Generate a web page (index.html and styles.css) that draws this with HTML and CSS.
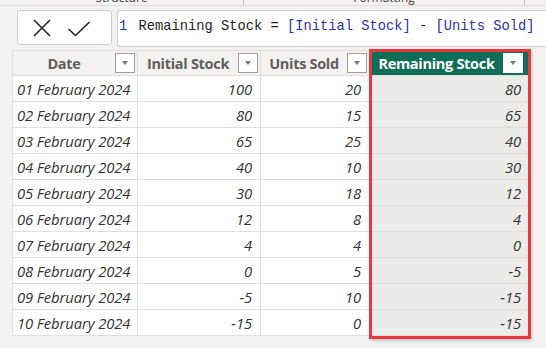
FILE: index.html
```html
<!DOCTYPE html>
<html>
<head>
<meta charset="utf-8">
<link rel="stylesheet" href="styles.css">
</head>
<body>
<div class="ribbon">
  <div class="rib-group g1"><span>Structure</span></div>
  <div class="rib-group g2"><span>Formatting</span></div>
  <div class="rib-group g3"></div>
</div>
<div class="formula-row">
  <div class="fx-buttons">
    <svg class="ico-x" width="20" height="20" viewBox="0 0 20 20"><path d="M2 2 L18 18 M18 2 L2 18" stroke="#252423" stroke-width="1.6" fill="none"/></svg>
    <svg class="ico-check" width="24" height="16" viewBox="0 0 24 16"><path d="M1.5 8 L8.5 14.5 L22.5 1" stroke="#252423" stroke-width="1.6" fill="none"/></svg>
  </div>
  <div class="fx-box"><span class="ln">1</span> Remaining Stock = <span class="ref">[Initial Stock]</span> - <span class="ref">[Units Sold]</span></div>
</div>
<div class="table-wrap">
  <div class="grid">
    <div class="hd"><span class="ht">Date</span><span class="dd"></span></div>
    <div class="hd"><span class="ht">Initial Stock</span><span class="dd"></span></div>
    <div class="hd"><span class="ht">Units Sold</span><span class="dd"></span></div>
    <div class="hd sel"><span class="ht">Remaining Stock</span><span class="dd"></span></div>

    <div class="c d">01 February 2024</div><div class="c n">100</div><div class="c n">20</div><div class="c n s">80</div>
    <div class="c d">02 February 2024</div><div class="c n">80</div><div class="c n">15</div><div class="c n s">65</div>
    <div class="c d">03 February 2024</div><div class="c n">65</div><div class="c n">25</div><div class="c n s">40</div>
    <div class="c d">04 February 2024</div><div class="c n">40</div><div class="c n">10</div><div class="c n s">30</div>
    <div class="c d">05 February 2024</div><div class="c n">30</div><div class="c n">18</div><div class="c n s">12</div>
    <div class="c d">06 February 2024</div><div class="c n">12</div><div class="c n">8</div><div class="c n s">4</div>
    <div class="c d">07 February 2024</div><div class="c n">4</div><div class="c n">4</div><div class="c n s">0</div>
    <div class="c d">08 February 2024</div><div class="c n">0</div><div class="c n">5</div><div class="c n s">-5</div>
    <div class="c d">09 February 2024</div><div class="c n">-5</div><div class="c n">10</div><div class="c n s">-15</div>
    <div class="c d">10 February 2024</div><div class="c n">-15</div><div class="c n">0</div><div class="c n s">-15</div>
  </div>
  <div class="highlight"></div>
</div>
</body>
</html>
```
FILE: styles.css
```css
html, body {
  margin: 0;
  padding: 0;
  background: #f3f2f1;
  width: 546px;
  height: 348px;
  overflow: hidden;
  font-family: "Open Sans", "Noto Sans", sans-serif;
}
.ribbon {
  height: 5px;
  display: flex;
  overflow: hidden;
  border-bottom: 1px solid #e1dfdd;
  background: #f3f2f1;
}
.rib-group {
  height: 5px;
  border-right: 1px solid #c8c6c4;
  display: flex;
  justify-content: center;
}
.rib-group span {
  font-size: 12px;
  color: #444;
  line-height: 12px;
  margin-top: -8px;
}
.g1 { width: 243px; }
.g2 { width: 280px; }
.g3 { flex: 1; border-right: none; }
.formula-row {
  display: flex;
  margin-top: 4px;
  padding-left: 17px;
  gap: 5px;
  height: 37px;
}
.fx-buttons {
  height: 33px;
  background: #fff;
  border: 1px solid #d2d0ce;
  border-radius: 3px;
  display: flex;
  align-items: center;
  padding-left: 14px;
  gap: 15px;
  width: 79px;
}
.ico-x { margin-top: 1px; }
.ico-check { margin-top: 3px; }
.fx-box {
  flex: 1;
  background: #fff;
  border: 1px solid #d2d0ce;
  border-right: none;
  border-radius: 3px 0 0 3px;
  height: 35px;
  font-family: "Liberation Mono", "DejaVu Sans Mono", monospace;
  font-size: 13.75px;
  line-height: 31px;
  padding-left: 1px;
  color: #252423;
  white-space: pre;
  overflow: hidden;
}
.fx-box .ln { color: #1e3a8a; margin-right: 3px; }
.fx-box .ref { color: #2f2fb0; }
.table-wrap {
  position: relative;
  margin-left: 12px;
  margin-top: 3px;
  width: 516px;
}
.grid {
  display: grid;
  grid-template-columns: 125px 123px 109px 159px;
  grid-auto-rows: 26px;
  grid-template-rows: 25px;
  border-left: 1px solid #e1dfdd;
  border-top: 1px solid #e1dfdd;
}
.hd {
  display: flex;
  align-items: center;
  background: #f3f2f1;
  border-right: 1px solid #e1dfdd;
  border-bottom: 1px solid #e1dfdd;
  padding-right: 2px;
}
.hd.sel {
  background: #106e56;
  border-right: none;
  padding-right: 6px;
}
.ht {
  flex: 1;
  text-align: center;
  font-weight: 700;
  font-size: 14.5px;
  color: #605e5c;
  white-space: nowrap;
  letter-spacing: -0.3px;
}
.hd.sel .ht { color: #fff; }
.dd {
  width: 18px;
  height: 18px;
  background: #fff;
  border: 1px solid #a19f9d;
  position: relative;
  flex: none;
}
.hd.sel .dd { border-color: #fff; }
.dd::after {
  content: "";
  position: absolute;
  left: 6px;
  top: 7px;
  border-left: 3.5px solid transparent;
  border-right: 3.5px solid transparent;
  border-top: 4px solid #7a7876;
}
.c {
  background: #fff;
  border-right: 1px solid #e1dfdd;
  border-bottom: 1px solid #e1dfdd;
  font-style: italic;
  font-size: 14.8px;
  color: #333;
  display: flex;
  align-items: center;
  white-space: nowrap;
  letter-spacing: -0.1px;
}
.c.d { padding-left: 4px; }
.c.n { justify-content: flex-end; padding-right: 8px; }
.c.s { background: #ebebea; border-right: none; border-bottom-color: #dcdcdc; }
.highlight {
  position: absolute;
  left: 357px;
  top: -1px;
  width: 156px;
  height: 284px;
  border: 3px solid #e6393c;
  box-shadow: 1px 2px 3px rgba(0,0,0,0.18);
  pointer-events: none;
}
```
